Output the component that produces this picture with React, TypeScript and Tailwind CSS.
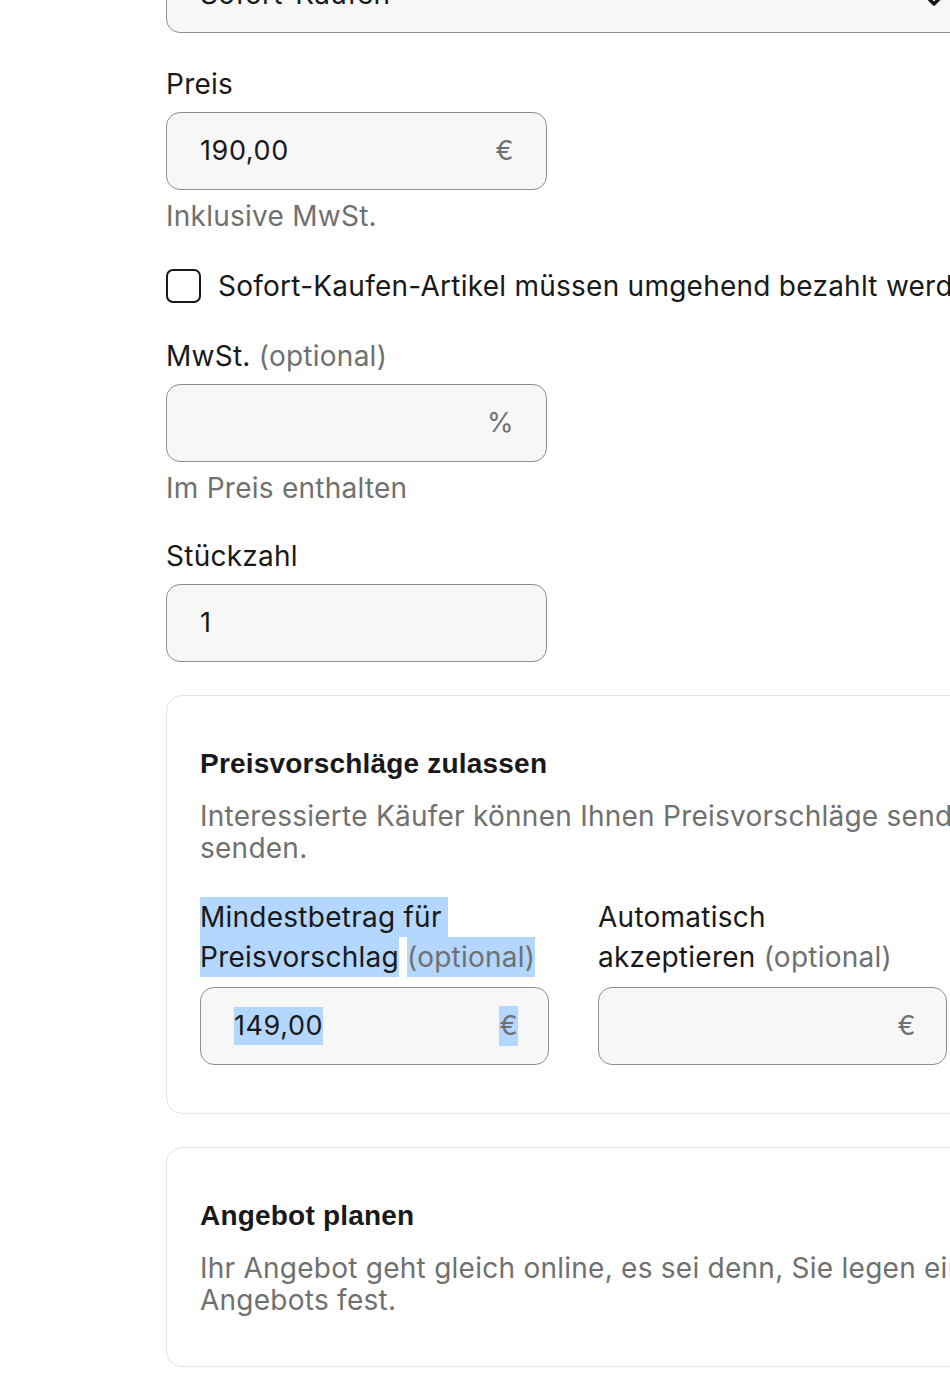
import React from "react";

const inputBox =
  "h-[78px] rounded-[14px] border-[1.5px] border-[#8f8f8f] bg-[#f7f7f7] flex items-center justify-between text-[27px] tracking-[0.6px]";

function Label({ children }: { children: React.ReactNode }) {
  return <div className="text-[28px] leading-[40px] text-[#191919]">{children}</div>;
}

function Optional() {
  return <span className="text-[#707070]">(optional)</span>;
}

export default function App() {
  return (
    <div className="w-[950px] h-[1398px] overflow-hidden bg-white font-['Inter','Liberation_Sans',Arial,sans-serif] tracking-[0.25px] text-[#191919]">
      <div className="ml-[166px] w-[815px] -mt-[45px]">
        {/* Format select */}
        <div className="w-[800px] h-[78px] rounded-[14px] border-[1.5px] border-[#8f8f8f] bg-[#f7f7f7] flex items-center pl-[33px] pr-[22px] text-[28px]">
          <span>Sofort-Kaufen</span>
          <svg className="ml-auto mt-[13px]" width="18" height="18" viewBox="0 0 18 18" fill="none">
            <path d="M3 6l6 6 6-6" stroke="#191919" strokeWidth="3.5" strokeLinecap="round" strokeLinejoin="round" />
          </svg>
        </div>

        {/* Preis */}
        <div className="mt-[31px]">
          <Label>Preis</Label>
        </div>
        <div className={`mt-[8px] w-[381px] pl-[33px] pr-[32px] ${inputBox}`}>
          <span>190,00</span>
          <span className="text-[#707070]">€</span>
        </div>
        <div className="mt-[6px] text-[28px] leading-[40px] text-[#707070]">Inklusive MwSt.</div>

        {/* Checkbox */}
        <div className="mt-[30px] h-[40px] flex items-center gap-[17px] whitespace-nowrap">
          <div className="w-[35px] h-[34px] shrink-0 rounded-[7px] border-2 border-[#191919] bg-white" />
          <span className="text-[28px] leading-[40px]">
            Sofort-Kaufen-Artikel müssen umgehend bezahlt werden
          </span>
        </div>

        {/* MwSt */}
        <div className="mt-[30px]">
          <Label>
            MwSt. <Optional />
          </Label>
        </div>
        <div className={`mt-[8px] w-[381px] pl-[33px] pr-[32px] ${inputBox}`}>
          <span />
          <span className="text-[#707070]">%</span>
        </div>
        <div className="mt-[6px] text-[28px] leading-[40px] text-[#707070]">Im Preis enthalten</div>

        {/* Stückzahl */}
        <div className="mt-[28px]">
          <Label>Stückzahl</Label>
        </div>
        <div className={`mt-[8px] w-[381px] pl-[33px] pr-[32px] ${inputBox}`}>
          <span>1</span>
        </div>

        {/* Preisvorschläge card */}
        <div className="mt-[33px] rounded-[16px] border-[1.5px] border-[#e5e5e5] px-[33px] pt-[48px] pb-[48px]">
          <div className="font-['Liberation_Sans',Arial,sans-serif] tracking-[0.2px] text-[28px] leading-[40px] font-bold">
            Preisvorschläge zulassen
          </div>
          <div className="mt-[16px] text-[28px] leading-[32px] text-[#707070]">
            <div className="whitespace-nowrap">
              Interessierte Käufer können Ihnen Preisvorschläge senden, die Sie annehmen, ablehnen oder beantworten können, anstatt zu
            </div>
            <div>senden.</div>
          </div>

          <div className="mt-[33px] grid grid-cols-2 gap-x-[49px]">
            <div>
              <div className="text-[28px] leading-[40px]">
                <div>
                  <span className="inline-block bg-[#b4d7ff] pr-[6px]">Mindestbetrag für</span>
                </div>
                <div>
                  <span className="bg-[#b4d7ff] inline-block">Preisvorschlag</span>{" "}
                  <span className="bg-[#b4d7ff] inline-block text-[#707070]">(optional)</span>
                </div>
              </div>
              <div className={`mt-[10px] pl-[33px] pr-[30px] ${inputBox}`}>
                <span className="bg-[#b4d7ff] leading-[38px]">149,00</span>
                <span className="bg-[#b4d7ff] leading-[40px] text-[#707070]">€</span>
              </div>
            </div>
            <div>
              <div className="text-[28px] leading-[40px]">
                <div>Automatisch</div>
                <div>
                  akzeptieren <Optional />
                </div>
              </div>
              <div className={`mt-[10px] pl-[33px] pr-[30px] ${inputBox}`}>
                <span />
                <span className="text-[#707070]">€</span>
              </div>
            </div>
          </div>
        </div>

        {/* Angebot planen card */}
        <div className="mt-[33px] rounded-[16px] border-[1.5px] border-[#e5e5e5] px-[33px] pt-[48px] pb-[50px]">
          <div className="font-['Liberation_Sans',Arial,sans-serif] tracking-[0.2px] text-[28px] leading-[40px] font-bold">
            Angebot planen
          </div>
          <div className="mt-[16px] text-[28px] leading-[32px] text-[#707070]">
            <div className="whitespace-nowrap">
              Ihr Angebot geht gleich online, es sei denn, Sie legen einen Startzeitpunkt für die Veröffentlichung Ihres
            </div>
            <div>Angebots fest.</div>
          </div>
        </div>
      </div>
    </div>
  );
}
